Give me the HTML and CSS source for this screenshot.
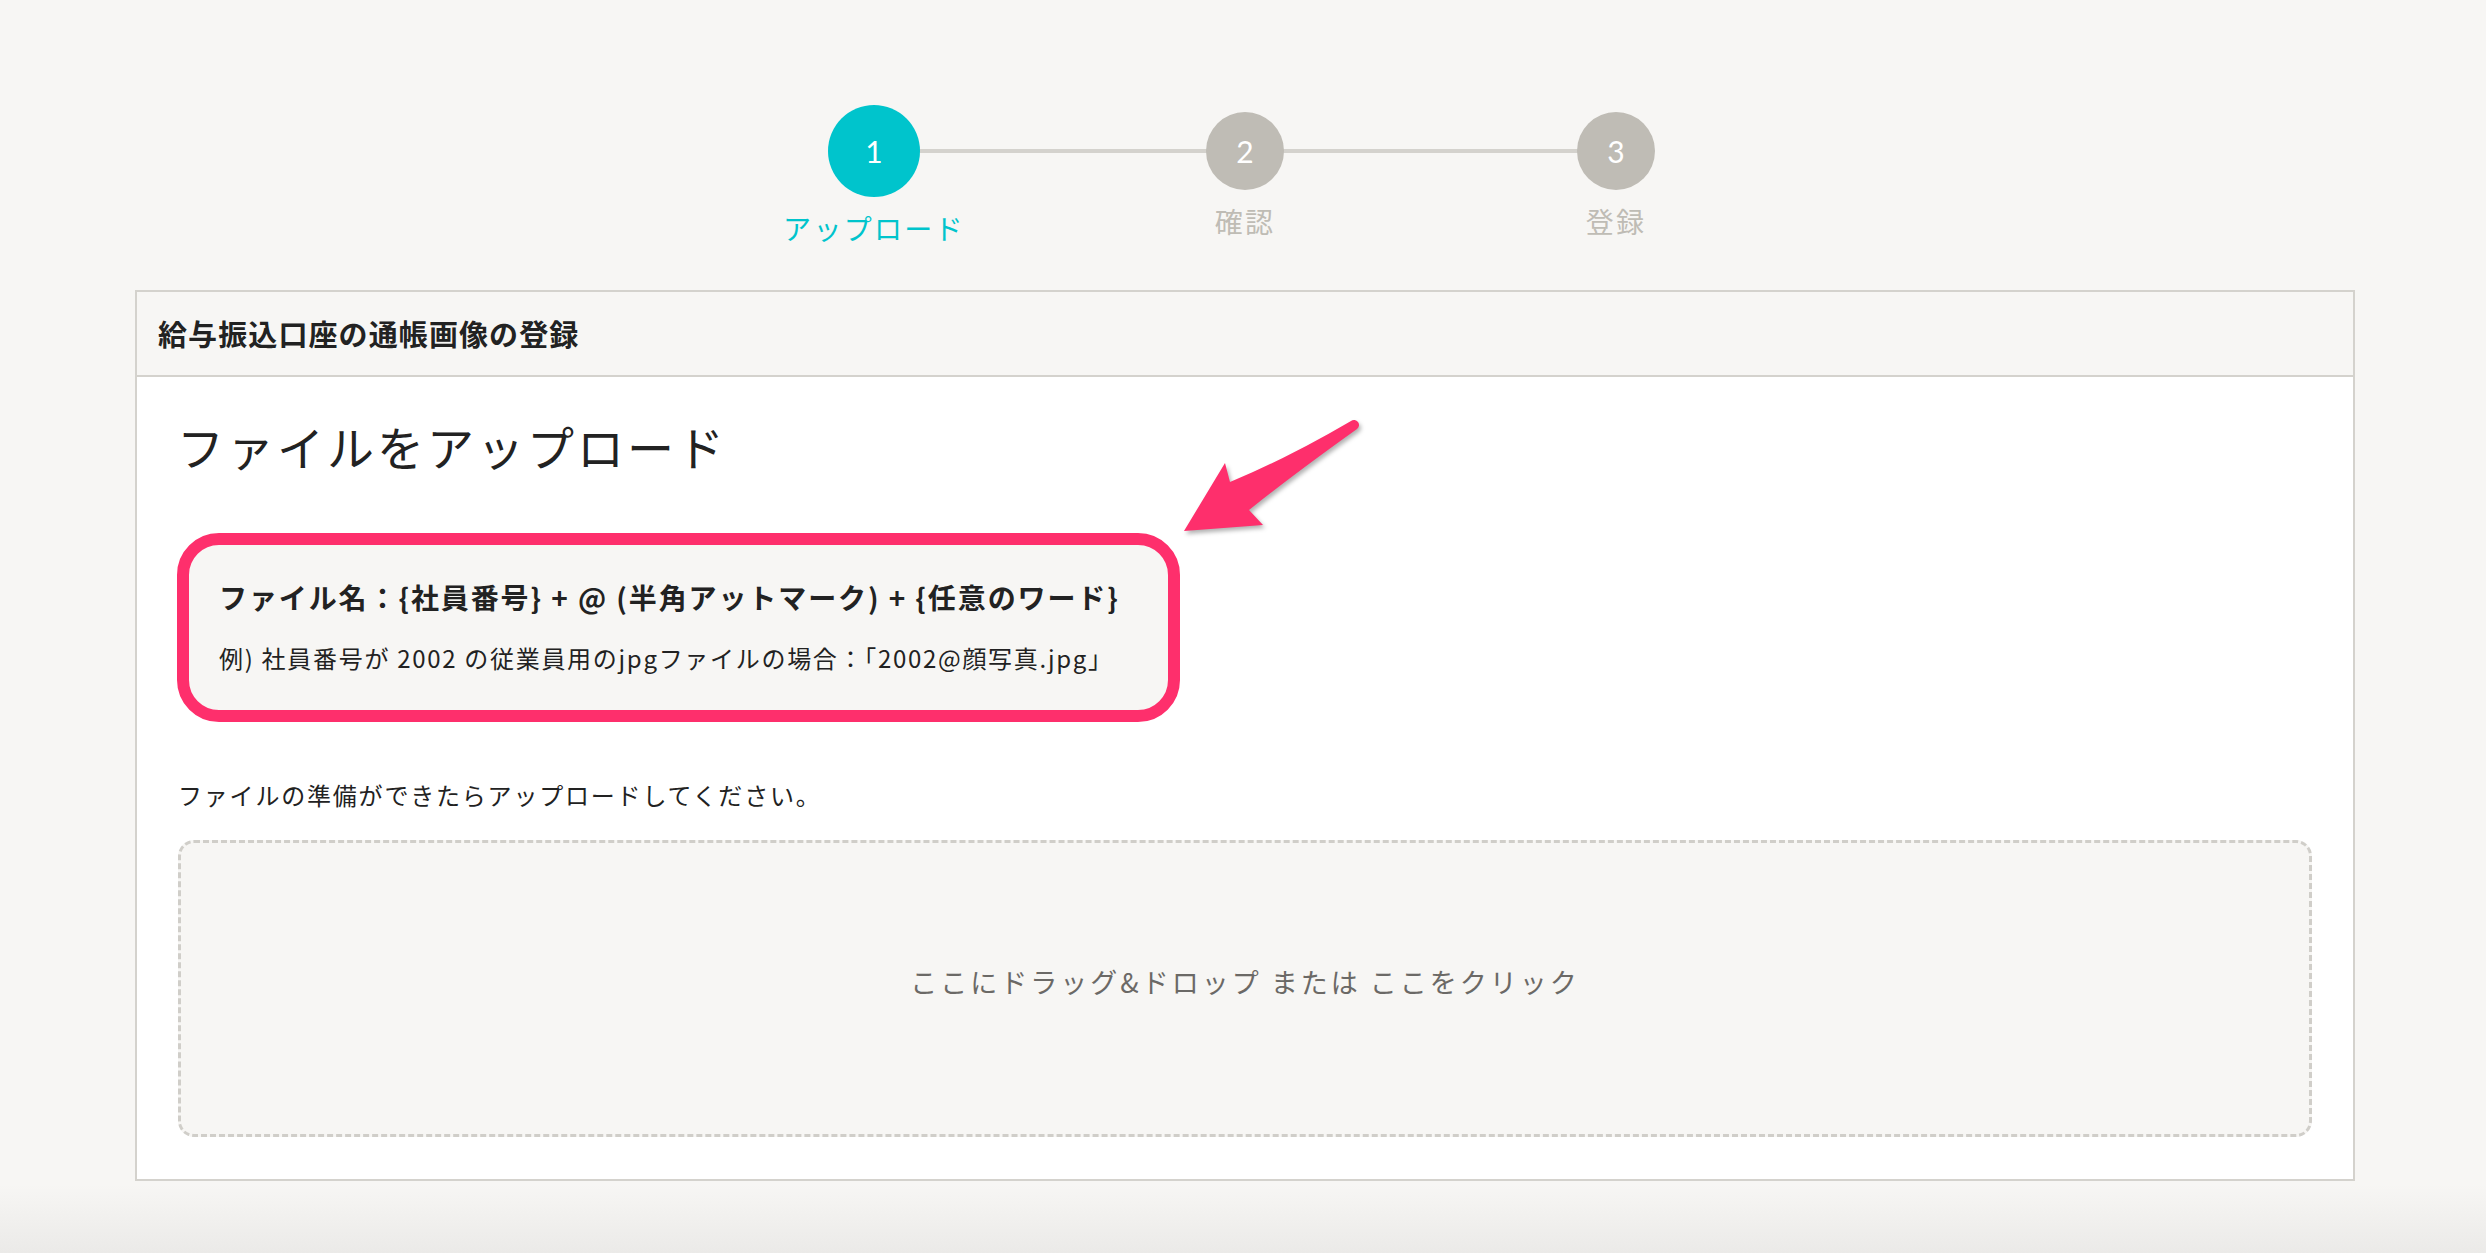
FILE: index.html
```html
<!DOCTYPE html>
<html lang="ja">
<head>
<meta charset="utf-8">
<title>給与振込口座の通帳画像の登録</title>
<link rel="stylesheet" href="styles.css">
</head>
<body>
<div class="page">
  <div class="stepper">
    <div class="step active">
      <div class="circle">1</div>
      <div class="label">アップロード</div>
    </div>
    <div class="step">
      <div class="circle">2</div>
      <div class="label">確認</div>
    </div>
    <div class="step">
      <div class="circle">3</div>
      <div class="label">登録</div>
    </div>
  </div>

  <div class="card">
    <div class="card-header">給与振込口座の通帳画像の登録</div>
    <div class="card-body">
      <h1 class="title">ファイルをアップロード</h1>
      <div class="note-wrap">
        <div class="note">
          <p class="note-main">ファイル名：{社員番号} + @ (半角アットマーク) + {任意のワード}</p>
          <p class="note-sub">例) 社員番号が 2002 の従業員用のjpgファイルの場合：「2002@顔写真.jpg」</p>
        </div>
        <svg class="arrow" width="195" height="135" viewBox="0 0 195 135">
          <path d="M8 121 L49 53 L54 72 Q112 48 175 11 A5 5 0 0 1 181 19 Q118 64 73 100 L87 115 Z" fill="#fe2f6c"/>
        </svg>
      </div>
      <p class="hint">ファイルの準備ができたらアップロードしてください。</p>
      <div class="dropzone">ここにドラッグ&amp;ドロップ または ここをクリック</div>
    </div>
  </div>
</div>
</body>
</html>
```
FILE: styles.css
```css
html, body {
  margin: 0;
  padding: 0;
}
body {
  font-family: "Noto Sans CJK JP", "Noto Sans", sans-serif;
  color: #222;
  background: linear-gradient(to bottom, #f7f6f4 0, #f7f6f4 1185px, #ebeae8 1253px);
  min-height: 1253px;
}
.page {
  padding-top: 105px;
}
.stepper {
  display: flex;
  justify-content: center;
  align-items: center;
  margin-left: 4px;
}
.step {
  width: 371px;
  display: flex;
  flex-direction: column;
  align-items: center;
  position: relative;
}
.step + .step::before {
  content: "";
  position: absolute;
  left: -186px;
  width: 371px;
  top: 37px;
  height: 4px;
  background: #d4d2cd;
  z-index: 0;
}
.circle {
  position: relative;
  z-index: 1;
  width: 78px;
  height: 78px;
  border-radius: 50%;
  background: #bfbcb5;
  color: #fff;
  font-size: 30px;
  display: flex;
  align-items: center;
  justify-content: center;
  font-family: "Lato", "Noto Sans", sans-serif;
}
.step.active .circle {
  width: 92px;
  height: 92px;
  background: #00c4cc;
}
.label {
  margin-top: 11px;
  font-size: 28px;
  line-height: 40px;
  letter-spacing: 2.3px;
  color: #bfbcb5;
}
.step.active .label {
  color: #00c4cc;
}
.card {
  margin: 42px 0 0 135px;
  width: 2220px;
  box-sizing: border-box;
  border: 2px solid #d4d2cd;
  background: #fff;
}
.card-header {
  height: 85px;
  box-sizing: border-box;
  border-bottom: 2px solid #d4d2cd;
  background: #f7f6f4;
  display: flex;
  align-items: center;
  padding-left: 21px;
  padding-bottom: 2px;
  font-size: 29px;
  font-weight: 700;
  letter-spacing: 1.1px;
  color: #222;
}
.card-body {
  padding: 33px 41px 42px 41px;
}
.title {
  margin: 0;
  font-size: 47px;
  line-height: 72px;
  font-weight: 400;
  letter-spacing: 3px;
  color: #222;
  margin-left: -1px;
}
.note-wrap {
  position: relative;
  margin-top: 51px;
}
.note {
  width: 1003px;
  height: 189px;
  box-sizing: border-box;
  margin-left: -1px;
  border: 12px solid #fe2f6c;
  border-radius: 42px;
  background: #f7f6f4;
  padding: 32px 20px 0 30px;
}
.note p {
  margin: 0;
  white-space: nowrap;
}
.note-main {
  font-size: 28px;
  line-height: 40px;
  font-weight: 700;
  letter-spacing: 1.9px;
}
.note-sub {
  margin-top: 23px !important;
  font-size: 24px;
  line-height: 36px;
  letter-spacing: 1.7px;
}
.arrow {
  position: absolute;
  left: 998px;
  top: -123px;
  filter: drop-shadow(2px 3px 2px rgba(0, 0, 0, 0.3));
}
.hint {
  margin: 55px 0 0 0;
  font-size: 24px;
  line-height: 36px;
  letter-spacing: 1.8px;
}
.dropzone {
  margin-top: 27px;
  height: 297px;
  box-sizing: border-box;
  border: 3px dashed #d0cec9;
  border-radius: 16px;
  background: #f7f6f4;
  display: flex;
  align-items: center;
  justify-content: center;
  padding-bottom: 14px;
  font-size: 27px;
  letter-spacing: 3px;
  color: #6b6966;
}
```
